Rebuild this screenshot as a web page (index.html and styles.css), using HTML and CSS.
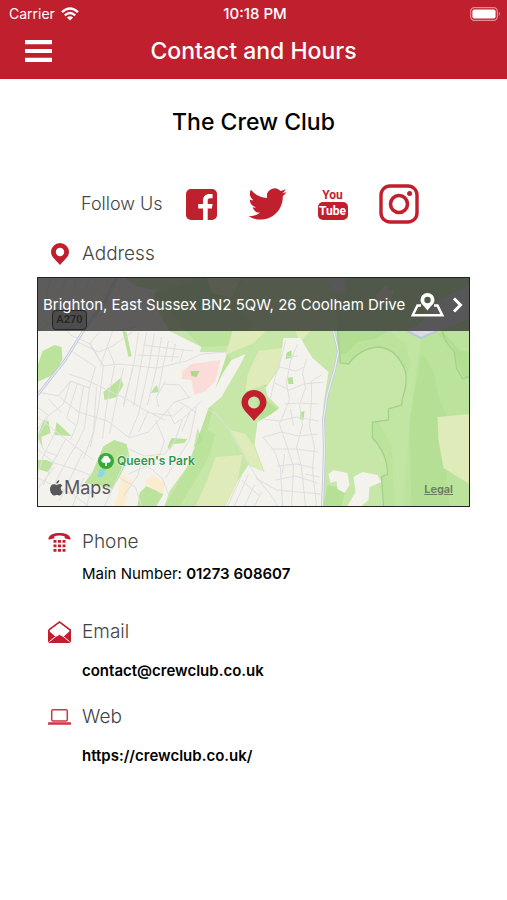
FILE: index.html
```html
<!DOCTYPE html>
<html lang="en">
<head>
<meta charset="utf-8">
<meta name="viewport" content="width=device-width, initial-scale=1">
<title>Contact and Hours</title>
<link rel="stylesheet" href="styles.css">
</head>
<body>
<header class="top">
  <div class="status">
    <span class="carrier">Carrier
      <svg width="18" height="14" viewBox="0 0 18 14" aria-hidden="true"><g fill="none" stroke="#fff" stroke-width="2.3"><path d="M1 5.2Q9-2.2 17 5.2"/><path d="M3.8 8.3Q9 3.6 14.2 8.3"/></g><path d="M9 13.6 5.9 10.4Q9 7.9 12.1 10.4Z" fill="#fff"/></svg>
    </span>
    <span class="clock">10:18 PM</span>
    <svg class="battery" width="31" height="14" viewBox="0 0 31 14" aria-hidden="true"><rect x=".7" y=".7" width="26.6" height="12.6" rx="3.6" fill="none" stroke="#e58d95" stroke-width="1.2"/><rect x="2.4" y="2.4" width="23.2" height="9.2" rx="2" fill="#fff"/><path d="M28.8 4.6Q31 7 28.8 9.4Z" fill="#e58d95"/></svg>
  </div>
  <div class="nav">
    <button class="menu" type="button" aria-label="Menu"><svg width="27" height="22" viewBox="0 0 27 22"><path d="M0 2.2h27M0 11h27M0 19.8h27" stroke="#fff" stroke-width="4.2"/></svg></button>
    <p class="page-name">Contact and Hours</p>
  </div>
</header>
<main>
  <h1>The Crew Club</h1>
  <section class="follow">
    <h2>Follow Us</h2>
    <nav class="social">
      <a href="#" aria-label="Facebook"><svg width="31" height="31" viewBox="0 0 31 31"><rect width="31" height="31" rx="5" fill="#c01f2e"/><path d="M17 31V19.4h-4.8v-4.5H17v-3.2c0-4.7 2.7-6.8 6.6-6.8 1.5 0 2.5.1 3 .2v4.2h-2.3c-2.2 0-2.6 1-2.6 2.6v3h4.9l-.7 4.5h-4.2V31Z" fill="#fff"/></svg></a>
      <a href="#" aria-label="Twitter"><svg width="39" height="32" viewBox="0 2 24 20"><path fill="#c01f2e" d="M23.95 4.57a10 10 0 0 1-2.82.77 4.96 4.96 0 0 0 2.16-2.72c-.95.55-2 .96-3.13 1.18a4.92 4.92 0 0 0-8.38 4.48C7.69 8.09 4.07 6.13 1.64 3.16a4.9 4.9 0 0 0 1.52 6.57 4.9 4.9 0 0 1-2.23-.61v.06c0 2.38 1.7 4.37 3.95 4.82a5 5 0 0 1-2.21.09 4.94 4.94 0 0 0 4.6 3.42A9.87 9.87 0 0 1 0 19.54a13.99 13.99 0 0 0 7.55 2.21c9.05 0 14-7.5 14-13.98l-.02-.64a9.94 9.94 0 0 0 2.42-2.56Z"/></svg></a>
      <a class="youtube" href="#" aria-label="YouTube"><span class="you">You</span><span class="tube">Tube</span></a>
      <a href="#" aria-label="Instagram"><svg width="40" height="40" viewBox="0 0 40 40"><g fill="none" stroke="#c01f2e"><rect x="2" y="2" width="36" height="36" rx="9" stroke-width="3.4"/><circle cx="20" cy="20" r="8.5" stroke-width="3.6"/></g><circle cx="30.6" cy="9.4" r="2.5" fill="#c01f2e"/></svg></a>
    </nav>
  </section>

  <section>
    <div class="heading address"><svg width="18" height="22" viewBox="0 0 18 22" aria-hidden="true"><path fill="#c01f2e" fill-rule="evenodd" d="M9 0a9 9 0 0 1 9 9c0 5-5 8-9 13-4-5-9-8-9-13a9 9 0 0 1 9-9Zm0 4.8a4.2 4.2 0 1 0 0 8.4 4.2 4.2 0 0 0 0-8.4Z"/></svg><h2>Address</h2></div>
    <div class="map">
      <svg class="terrain" viewBox="38 278 432 228" preserveAspectRatio="xMidYMid slice" aria-hidden="true">
        <path fill="#f4f2ec" d="M38 278h432v228H38Z"/>
        <path fill="#c6e7a8" d="M126 278 138 287 157 290 152 300 170 331 202 347 200 352 230 352 222 371 213 397 205 420 198 440 194 458 184 472 170 491 165 506H470V278Z"/>
        <g fill="#bbe39b">
          <path d="M38 366 43 351 55 345 62 347 63 359 55 374 38 382Z"/>
          <path d="M93 472 104 446 115 440 127 444 130 456 121 475 113 489 103 486 85 483Z"/>
          <path d="M123 331 127 332 132 356 129 357Z"/><path d="M104 392 121 378 124 385 117 397 105 400Z"/><path d="M38 436 44 420 49 421 51 433 42 437 43 447Z"/><path d="M57 422 72 436 55 435Z"/><path d="M38 460h9l7 3-6 9-10-3Z"/><path d="M151 393 157 385 160 392Z"/><path d="M168 447 172 438 188 439 185 443 174 444 170 450Z"/>
          <path d="M140 493 147 486 164 494 157 506h-19Z"/>
          <path d="M155 293 202 278H244L232 299 254 325 240 345 202 347 184 329Z"/>
          <path d="M228 352 232 360 214 395 205 403 213 410 208 430 216 434 210 455 196 480 180 506H165L186 471 198 440 205 420 213 397 222 371Z"/>
          <path d="M338 330V363L349 364Q360 349 378 347 398 348 406 372 408 385 403 398L402 405 389 409 389 420 373 422 373 438Q388 454 388 474L382 477 384 506H470V278H335Z"/>
        </g>
        <path fill="#c6e7a8" d="M390 331h24l8 10-4 22-8 62-6 81h-9l-3-60-14-25 3-10 15-5 6-20 9-20-5-23-12-9Z" opacity=".55"/>
        <g fill="#abdc8b" opacity=".6">
          <path d="M422 353 434 372 440 400 450 424 444 440 450 506H412L410 420Z" opacity=".65"/>
          <path d="M338 331h50l-10 7-20 4-12 12h-8ZM443 331 460 350 470 352V380l-7-4-10-30-14-11Z"/>
          <path d="M258 398h6l16 12 3 8-12 3-13-2Z"/><path d="M263 463 272 468 268 476 260 471Z"/><path d="M263 375 271 371 266 386 259 384Z"/><path d="M328 485 346 490 342 506h-18Z"/><path d="M198 428 194 448 203 440Z"/>
        </g>
        <g fill="#dfebb9">
          <path d="M233 331H266L254 343 226 355Z"/><path d="M259 351 283 348 280 366 268 384 246 391 248 375Z"/><path d="M216 457 243 455 238 482 226 506H196L207 482Z"/><path d="M438 417 470 414V484L444 468 439 440Z"/><path d="M231 430 246 434 254 446 266 475 250 464Z"/><path d="M296 331H311L300 342Z"/>
          <path d="M207 278h35l-10 20-19-5Z"/>
        </g>
        <g fill="#f4f2ec">
          <path d="M284 338 301 338 308 350 313 358 329 372 324 404 323 506H226L239 480 249 465 265 472 255 445 258 422 272 414 280 408 268 396 266 388 280 368Z"/>
          <path d="M246 354 240 366 233 378 222 397 209 408 203 402 213 394 224 372 232 360Z"/>
          <path d="M329 474 334 470 348 473 350 485 345 493 338 489 337 481 331 483Z"/><path d="M354 477 363 472 378 475 382 482 370 487 369 500 362 506H348L356 492Z"/>
        </g>
        <g fill="#dcdce1"><path d="M408 331 420 324 440 300 470 285V318L440 331 421 338Z"/><path d="M326 278 346 278 345 293 337 294Z"/></g>
        <path fill="#e7e0c6" d="M377 295 385 286 394 291 390 303 377 308Z"/>
        <path fill="#fbdcd9" d="M183 371 192 364 221 360 216 381 206 391 195 395 192 380 182 379Z"/>
        <g fill="#fdebcd"><path d="M123 475 133 481 124 506h-9Z"/><path d="M153 475 166 484 162 494 145 482Z"/></g>
        <path fill="#a9db8c" d="M191 371h9l-3 6-5-1Z"/><path fill="#8dd7ed" d="M100 469h7l-4 8h-5Z"/>
        <path fill="#b6e096" d="M287 353 292 350 292 358 286 359ZM288 378 293 377 294 384 289 384ZM301 412 305 411 304 420 300 419Z"/>
        <g fill="none" stroke="#dedfe2" stroke-width="1">
          <path d="M38 332 67 312 101 286M51 278 47 297 55 316 71 335 91 344 104 366 119 364 157 368 187 361 202 354 228 352M66 278 60 302 70 316M77 278 73 304M90 278 85 295M76 341 99 352 113 346 133 332M72 351 96 367 90 388 71 381 59 396 38 392M101 366 113 331 137 327M103 365 90 344 100 332M108 347 115 364M139 332 134 366 124 404M147 332 141 367 134 406M155 333 149 368 139 414M162 337 157 368 148 405M169 341 164 364 158 396M176 344 172 362M184 349 180 362M143 345 194 351M138 355 179 357"/>
          <path d="M71 381 64 404 46 418 38 430M78 383 67 418 76 425M84 386 78 423 71 440M90 388 85 428 75 449M97 387 94 432 84 459M104 365 99 407 91 447M115 366 107 406 103 439M124 368 116 405 110 434M133 368 124 407M60 397 79 412 108 421 130 438 149 432 161 418 175 402 191 397M69 374 87 380 108 390 129 400 145 410 165 420M49 399 62 413M38 407 50 416M38 417 56 431 75 446 94 460M48 418 38 438 45 451 58 456M56 431 44 456 38 475M66 439 52 466 44 485M75 447 60 474 51 493M83 453 69 482 60 501M38 449 55 463 81 471 92 476M38 478 56 486 74 495 89 506M55 467 38 489"/>
          <path d="M129 449 145 456 165 454 175 442 183 419 202 401M132 460 152 469 163 479 169 494M120 478 136 487 142 506M129 454 111 493 105 506M94 483 87 506M84 478 73 506M139 414 129 438M149 411 139 432M156 420 165 441 160 455 145 467 129 474M168 410 175 424 182 419M178 401 190 408 197 413M164 384 180 385 190 398M166 381 157 397 159 407M190 413 182 432M197 407 190 440 180 456 166 478M144 455 138 476 124 496M184 407 174 416 151 413"/>
          <path d="M208 409 217 414 230 430 244 456 259 480 272 496 278 506M286 341 282 357 276 376 271 398M290 400 280 424 287 445 294 467 292 506M298 344 291 361 287 383 290 400M307 359 303 373 306 388 300 405 303 425 297 447 302 467 306 506M322 375 312 381 312 399 310 427 315 446 313 469 317 506M277 366 296 371 305 367M275 383 290 390 304 384 324 382M285 404 299 403 318 404M264 419 280 421 297 417 319 421M264 437 282 432 299 436 318 434M272 449 295 449 319 452M278 466 297 464 315 468M276 480 296 476 318 483M263 437 275 451 281 468 283 506M256 478 277 490 321 494M242 480 260 496M242 476 228 506M249 474 235 506M255 485 245 506M262 492 255 506M288 357 298 356M291 409 294 426M285 454 283 474M306 474 320 477"/>
        </g>
        <path d="M117 278 105 302 85 329 65 361 38 395M334 331 339 351 335 370 328 394 324 419 325 451 323 506" stroke="#c9cedb" stroke-width="3" fill="none"/>
        <path d="M117 278 105 302 85 329 65 361 38 395M334 331 339 351 335 370 328 394 324 419 325 451 323 506" stroke="#edf0f5" stroke-width="1" fill="none"/>
        <path d="M408 331 421 338 438 331" fill="none" stroke="#b9c9dc" stroke-width="2"/>
        <path d="M338 330 341 363 349 364Q360 349 378 347 398 348 406 372 408 385 403 398L402 405 389 409 389 420 373 422 373 438Q388 454 388 474L382 477 384 506M443 331 446 341 455 352 457 368 463 379 470 376" fill="none" stroke="#a3d08b" stroke-width="1.3"/>
      </svg>
      <span class="road">A270</span>
      <a class="address-bar" href="#">
        <span>Brighton, East Sussex BN2 5QW, 26 Coolham Drive</span>
        <svg width="52" height="24" viewBox="0 0 52 24" aria-hidden="true"><path d="M10 12.5H6.5L1.7 22.3H31.3L26.5 12.5H23" fill="none" stroke="#fff" stroke-width="2.5"/><path fill="#fff" fill-rule="evenodd" d="M16.5 0a7 7 0 0 1 7 7c0 4-4 6-7 10.5C13.500 13 9.500 11 9.500 7a7 7 0 0 1 7-7Zm0 3.800a3.200 3.200 0 1 0 0 6.400 3.200 3.200 0 0 0 0-6.400Z"/><path d="M43 5.500 49.500 12 43 18.500" fill="none" stroke="#fff" stroke-width="3"/></svg>
      </a>
      <svg class="pin" width="26" height="31" viewBox="0 0 26 31" aria-label="Location"><path fill="#c01f2e" fill-rule="evenodd" d="M13 0a12.500 12.500 0 0 1 12.500 12.500C25.500 20 18 24 13 31 8 24 .5 20 .5 12.500A12.500 12.500 0 0 1 13 0Zm0 6.500a6 6 0 1 0 0 12 6 6 0 0 0 0-12Z"/></svg>
      <span class="park"><svg width="16" height="16" viewBox="0 0 16 16" aria-hidden="true"><circle cx="8" cy="8" r="8" fill="#38aa3d"/><path fill="#fff" d="M7.200 13V9.800H5.500A2.400 2.400 0 0 1 4.800 5.200 3.300 3.300 0 0 1 11.200 5.200a2.400 2.400 0 0 1-.7 4.600H8.800V13Z"/></svg>Queen's Park</span>
      <span class="maps"><svg width="13" height="16" viewBox="0 0 13 16" aria-hidden="true"><path fill="#58585a" d="M9.300 0C9.400 2 8 3.700 6.300 3.800 6.100 2 7.600.3 9.300 0ZM6.700 4.900C7.500 4.900 8.300 4.100 9.600 4.100c1.100 0 2.200.6 2.800 1.500-2.500 1.500-2.100 4.900.5 6-.6 1.700-2 4-3.300 4-1 0-1.500-.7-2.700-.7-1.200 0-1.700.7-2.600.7C2.300 15.600 0 12.100 0 8.900c0-3 1.900-4.700 3.900-4.700 1.200 0 2.100.7 2.800.7Z"/></svg>Maps</span>
      <a class="legal" href="#">Legal</a>
    </div>
  </section>

  <section class="phone">
    <div class="heading"><svg width="23" height="19" viewBox="0 0 23 19" aria-hidden="true"><g fill="#c01f2e"><path d="M.4 5.600C1.300 1.700 6 0 11.500 0s10.200 1.700 11.100 5.600c.1.800-.3 1.200-1 1l-4.100-1c-.6-.2-.9-.5-.9-1.100V3.200Q11.500 1.700 6.400 3.200v1.300c0 .6-.3.9-.9 1.100l-4.100 1c-.7.200-1.100-.2-1-1Z"/><path d="M5.500 7h3v2.700h-3ZM10 7h3v2.700h-3ZM14.500 7h3v2.700h-3ZM5.500 11.500h3v2.700h-3ZM10 11.500h3v2.700h-3ZM14.500 11.500h3v2.700h-3ZM5.500 16h3v2.700h-3ZM10 16h3v2.700h-3ZM14.500 16h3v2.700h-3Z"/></g></svg><h2>Phone</h2></div>
    <p class="detail">Main Number: <a href="tel:01273608607">01273 608607</a></p>
  </section>
  <section class="email">
    <div class="heading"><svg width="23" height="22" viewBox="0 0 23 22" aria-hidden="true"><path fill="#c01f2e" d="M0 9v11q0 2 2 2h19q2 0 2-2V9l-7 6.200L11.500 13 7 15.200Z"/><path d="M.8 9 11.500 1 22.200 9v5" fill="none" stroke="#c01f2e" stroke-width="1.600"/><path d="M.8 9v5" stroke="#c01f2e" stroke-width="1.600"/><path d="M2.200 9.300 11.500 2.200 20.800 9.300 15.800 15 11.500 13 7.200 15Z" fill="#fff"/><path d="M1.500 20.500 8 15.300 11.500 13.500 15 15.300 21.500 20.500" fill="none" stroke="#fff"/></svg><h2>Email</h2></div>
    <p class="detail"><a href="mailto:contact@crewclub.co.uk">contact@crewclub.co.uk</a></p>
  </section>
  <section class="web">
    <div class="heading"><svg width="23" height="16" viewBox="0 0 23 16" aria-hidden="true"><g fill="none" stroke="#cf3544"><rect x="3.700" y=".8" width="15.600" height="11.200" rx="1.500" stroke-width="1.500"/><path d="M.8 14.500H22.200" stroke-width="2.300" stroke-linecap="round"/></g></svg><h2>Web</h2></div>
    <p class="detail"><a href="https://crewclub.co.uk/">https://crewclub.co.uk/</a></p>
  </section>
</main>
</body>
</html>
```
FILE: styles.css
```css
* { box-sizing: border-box; }
body { margin: 0; background: #fff; color: #000; font-family: Inter, "Liberation Sans", sans-serif; }
h1, h2, p { margin: 0; }
a { color: inherit; text-decoration: none; }
svg { display: block; flex: none; }

.top { background: #c01f2e; color: #fff; padding-bottom: 4px; }
.status { display: grid; grid-template-columns: 1fr auto 1fr; align-items: center; height: 27px; padding: 0 6px 0 9px; font-size: 14px; }
.carrier { display: flex; align-items: center; gap: 6px; }
.clock { font-size: 15px; font-weight: 500; }
.battery { justify-self: end; }
.nav { display: grid; grid-template-columns: 1fr auto 1fr; align-items: center; height: 48px; padding: 0 25px; }
.menu { justify-self: start; padding: 0; border: 0; background: none; }
.page-name { font-size: 23px; font-weight: 500; }

main { padding: 27px 37px 40px; }
h1 { text-align: center; font-size: 23px; line-height: 32px; font-weight: 500; }
h2 { font-size: 19px; line-height: 28px; font-weight: 300; color: #444; }

.follow { display: flex; align-items: center; gap: 23px; height: 40px; margin-top: 46px; padding-left: 44px; }
.follow h2 { font-size: 18px; }
.social { display: flex; align-items: center; gap: 31px; }
.youtube { display: flex; flex-direction: column; align-items: center; width: 30px; font-family: Roboto, "Liberation Sans", sans-serif; font-weight: 700; font-size: 12px; color: #c01f2e; }
.you { line-height: 14px; }
.tube { width: 30px; text-align: center; line-height: 18px; border-radius: 5px; background: #c01f2e; color: #fff; }

.heading { display: grid; grid-template-columns: 45px 1fr; align-items: center; }
.heading svg { justify-self: center; }
.address { margin-top: 16px; }

.map { position: relative; height: 230px; margin-top: 9px; border: 1px solid #222; overflow: hidden; }
.terrain { position: absolute; inset: 0; width: 100%; height: 100%; }
.address-bar { position: relative; display: flex; align-items: center; justify-content: space-between; height: 53px; padding: 0 6px 0 5px; background: rgba(50, 50, 50, .78); color: #fff; font-size: 15px; }
.road { position: absolute; left: 14px; top: 32px; width: 35px; height: 20px; border: 1px solid #000; border-radius: 4px; background: #aaa; color: #000; font-family: Roboto, "Liberation Sans", sans-serif; font-size: 11px; font-weight: 700; line-height: 18px; text-align: center; }
.pin { position: absolute; left: calc(50% - 13px); top: 112px; }
.park { position: absolute; left: 60px; top: 174px; display: flex; align-items: center; gap: 3px; color: #339747; font-size: 12px; line-height: 18px; font-weight: 600; text-shadow: 0 0 2px #fff, 0 0 2px #fff; }
.maps { position: absolute; left: 12px; top: 197px; display: flex; align-items: center; gap: 1px; color: #58585a; font-size: 18px; line-height: 26px; }
.legal { position: absolute; right: 16px; top: 202px; color: #6b7b60; font-size: 11px; line-height: 18px; font-weight: 600; text-decoration: underline; }

.phone { margin-top: 21px; }
.email { margin-top: 34px; }
.web { margin-top: 22px; }
.detail { margin-top: 8px; padding-left: 45px; font-size: 15px; line-height: 20px; }
.detail a { font-weight: 600; }
.email .detail, .web .detail { margin-top: 15px; }
```
